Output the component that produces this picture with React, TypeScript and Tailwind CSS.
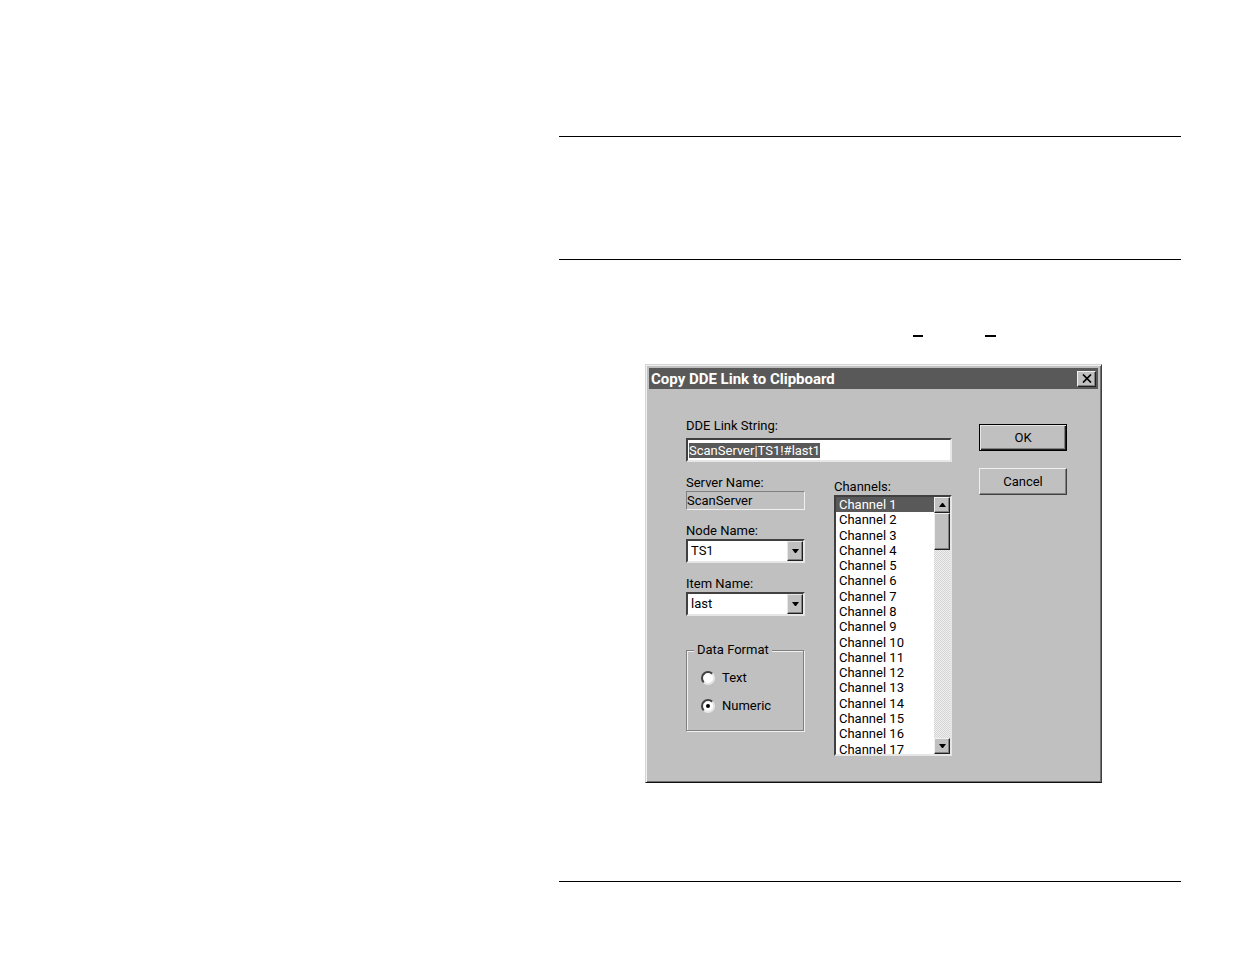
import React, { useEffect, useRef, useState } from 'react';

const channels = Array.from({ length: 17 }, (_, i) => `Channel ${i + 1}`);

const Arrow: React.FC<{ up?: boolean }> = ({ up }) => (
  <svg width="7" height="4" viewBox="0 0 7 4" fill="#000" aria-hidden="true">
    {up ? <path d="M0 4h7L4 0H3z" /> : <path d="M0 0h7L4 4H3z" />}
  </svg>
);

interface ComboProps {
  id: string;
  label: string;
  options: string[];
}

const Combo: React.FC<ComboProps> = ({ id, label, options }) => (
  <div>
    <label htmlFor={id} className="block">{label}</label>
    <div className="relative h-6 border-2 border-t-[#404040] border-l-[#404040] border-r-[#e6e6e6] border-b-[#e6e6e6] bg-white">
      <select id={id} className="block h-5 w-full appearance-none bg-white pl-[3px] outline-none">
        {options.map((o) => (
          <option key={o}>{o}</option>
        ))}
      </select>
      <span className="pointer-events-none absolute inset-y-0 right-0 flex w-4 items-center justify-center border border-t-[#e6e6e6] border-l-[#e6e6e6] border-r-[#202020] border-b-[#202020] bg-[#c0c0c0] shadow-[inset_-1px_-1px_#808080]">
        <Arrow />
      </span>
    </div>
  </div>
);

const radioClass =
  "flex size-[14px] appearance-none items-center justify-center rounded-full border-2 border-t-[#404040] border-l-[#404040] border-r-[#e6e6e6] border-b-[#e6e6e6] bg-white before:size-1 before:rounded-full before:content-[''] checked:before:bg-black";

const scrollButton =
  'flex h-4 shrink-0 items-center justify-center border border-t-[#f0f0f0] border-l-[#f0f0f0] border-r-[#202020] border-b-[#202020] bg-[#c0c0c0] shadow-[inset_-1px_-1px_#808080]';

const CopyLinkDialog: React.FC = () => {
  const linkRef = useRef<HTMLInputElement>(null);
  const [format, setFormat] = useState('numeric');

  useEffect(() => {
    linkRef.current?.focus();
    linkRef.current?.select();
  }, []);

  return (
    <section
      role="dialog"
      aria-labelledby="dialog-title"
      className="w-[457px] border border-t-[#d4d4d4] border-l-[#d4d4d4] border-r-[#404040] border-b-[#101010] bg-[#c0c0c0] font-[Roboto,sans-serif] text-[13px] leading-4 text-black shadow-[inset_1px_1px_#f0f0f0,inset_-1px_-1px_#707070]"
    >
      {/* Title bar */}
      <header className="mx-[3px] mt-[3px] flex h-[21px] items-center justify-between bg-[#595959] pr-0.5 pl-0.5">
        <h1 id="dialog-title" className="text-[15px] font-bold text-white">Copy DDE Link to Clipboard</h1>
        <button
          aria-label="Close"
          className="flex h-4 w-[19px] items-center justify-center border border-t-[#f0f0f0] border-l-[#f0f0f0] border-r-[#202020] border-b-[#202020] bg-[#c0c0c0] shadow-[inset_-1px_-1px_#808080]"
        >
          <svg width="10" height="9" viewBox="0 0 10 9" stroke="#000" strokeWidth="1.7" aria-hidden="true">
            <path d="M1 0.5l8 8M9 0.5l-8 8" />
          </svg>
        </button>
      </header>

      <div className="flex gap-[27px] pt-[29px] pr-[34px] pb-[26px] pl-10">
        <div className="w-[266px]">
          <label htmlFor="link" className="block">DDE Link String:</label>
          <input
            id="link"
            ref={linkRef}
            defaultValue="ScanServer|TS1!#last1"
            className="mt-1 block h-6 w-full border-2 border-t-[#404040] border-l-[#404040] border-r-[#e6e6e6] border-b-[#e6e6e6] bg-white px-px leading-[18px] caret-transparent outline-none selection:bg-[#595959] selection:text-white"
          />

          <div className="flex justify-between">
            <div className="w-[119px] pt-[13px]">
              <label htmlFor="server" className="block">Server Name:</label>
              <input
                id="server"
                readOnly
                value="ScanServer"
                className="mb-[13px] block h-[19px] w-full border border-t-[#808080] border-l-[#808080] border-r-[#f0f0f0] border-b-[#f0f0f0] outline-none"
              />
              <div className="flex flex-col gap-[13px]">
                <Combo id="node" label="Node Name:" options={['TS1']} />
                <Combo id="item" label="Item Name:" options={['last']} />
              </div>

              <fieldset className="mt-[26px] mr-px h-[89px] border border-[#808080] pl-[14px] shadow-[1px_1px_#f0f0f0,inset_1px_1px_#f0f0f0]">
                <legend className="-ml-[7px] bg-[#c0c0c0] px-[3px]">Data Format</legend>
                <div className="flex flex-col gap-3 pt-3">
                  <label className="flex items-center gap-[7px]">
                    <input type="radio" name="format" className={radioClass} checked={format === 'text'} onChange={() => setFormat('text')} />
                    Text
                  </label>
                  <label className="flex items-center gap-[7px]">
                    <input type="radio" name="format" className={radioClass} checked={format === 'numeric'} onChange={() => setFormat('numeric')} />
                    Numeric
                  </label>
                </div>
              </fieldset>
            </div>

            <div className="w-[118px] pt-[17px]">
              <label htmlFor="channels" className="block">Channels:</label>
              <div className="flex h-[261px] overflow-hidden border-2 border-t-[#404040] border-l-[#404040] border-r-[#e6e6e6] border-b-[#e6e6e6] bg-white">
                <select
                  id="channels"
                  size={17}
                  defaultValue="Channel 1"
                  className="h-[260px] min-w-0 flex-1 overflow-hidden outline-none [scrollbar-width:none]"
                >
                  {channels.map((c) => (
                    <option
                      key={c}
                      className="h-[calc(100%/17)] min-h-0 p-0 pl-[3px] leading-[15px] checked:bg-[linear-gradient(#595959,#595959)] checked:text-white"
                    >
                      {c}
                    </option>
                  ))}
                </select>
                {/* Scroll bar */}
                <div className="flex w-4 flex-col bg-[#e6e6e6] bg-[conic-gradient(#d4d4d4_25%,#f0f0f0_0_50%,#d4d4d4_0_75%,#f0f0f0_0)] bg-size-[2px_2px]">
                  <button aria-label="Scroll up" className={scrollButton}><Arrow up /></button>
                  <div className="h-[37px] border border-t-[#f0f0f0] border-l-[#f0f0f0] border-r-[#202020] border-b-[#202020] bg-[#c0c0c0] shadow-[inset_-1px_-1px_#808080]" />
                  <button aria-label="Scroll down" className={`${scrollButton} mt-auto`}><Arrow /></button>
                </div>
              </div>
            </div>
          </div>
        </div>

        <div className="flex flex-1 flex-col gap-[17px] pt-1.5">
          <button className="h-[27px] border border-black bg-[#c0c0c0] shadow-[inset_1px_1px_#e6e6e6,inset_-1px_-1px_#202020,inset_-2px_-2px_#808080]">OK</button>
          <button className="h-[27px] border border-t-[#f0f0f0] border-l-[#f0f0f0] border-r-[#404040] border-b-[#404040] bg-[#c0c0c0] shadow-[inset_-1px_-1px_#808080]">Cancel</button>
        </div>
      </div>
    </section>
  );
};

const App: React.FC = () => (
  <main className="min-h-screen bg-white pt-[136px] pr-[54px] pl-[559px]">
    <hr className="border-black" />
    <hr className="mt-[122px] border-black" />
    {/* Key underlines */}
    <div className="mt-[75px] flex gap-[62px] pl-[354px]">
      <span className="h-0.5 w-[10px] bg-black" />
      <span className="h-0.5 w-[11px] bg-black" />
    </div>
    <div className="mt-[27px] pl-[86px]">
      <CopyLinkDialog />
    </div>
    <hr className="mt-[98px] border-black" />
  </main>
);

export default App;
